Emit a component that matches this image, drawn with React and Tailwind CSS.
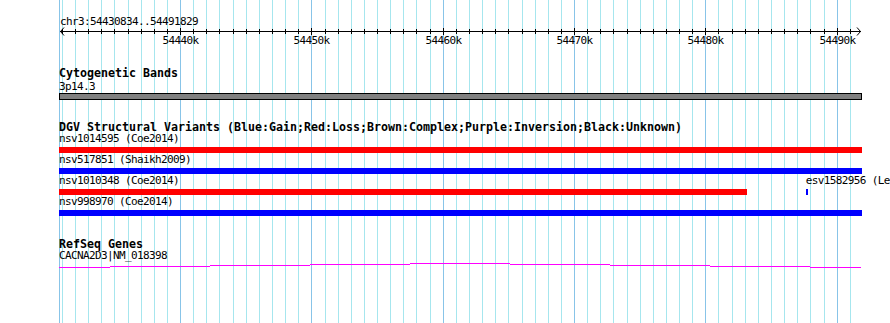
const START = 54430834;
const END = 54491829;
const SCALE = 801 / 60995;
const LEFT = 59; // left edge of the track area
const RIGHT = 862;

const toX = (bp) => 59.7 + (bp - START) * SCALE;
const clampX = (x) => Math.min(RIGHT, Math.max(LEFT, x));

const gridLines = [];
for (let k = 54431; k <= 54491; k++) {
  gridLines.push({ k, x: Math.round(toX(k * 1000)), major: k % 10 === 0 });
}

const dgvRows = [
  [{ name: 'nsv1014595', ref: 'Coe2014', start: 54300000, end: 54600000, color: 'bg-[#ff0000]' }],
  [{ name: 'nsv517851', ref: 'Shaikh2009', start: 54300000, end: 54600000, color: 'bg-[#0000ff]' }],
  [
    { name: 'nsv1010348', ref: 'Coe2014', start: 54300000, end: 54483147, color: 'bg-[#ff0000]' },
    { name: 'esv1582956', ref: 'Lee2008', start: 54487641, end: 54487793, color: 'bg-[#0000ff]' },
  ],
  [{ name: 'nsv998970', ref: 'Coe2014', start: 54300000, end: 54591700, color: 'bg-[#0000ff]' }],
];

// intron connector of CACNA2D3, drawn as a stepped shallow hat
const geneSteps = [
  [59, 110, 5],
  [110, 210, 4],
  [210, 310, 3],
  [310, 410, 2],
  [410, 510, 1],
  [510, 610, 2],
  [610, 710, 3],
  [710, 810, 4],
  [810, 861, 5],
];

const Title = ({ children, className = '' }) => (
  <div className={`text-[11.63px] font-bold whitespace-nowrap ${className}`}>{children}</div>
);

const Label = ({ children, className = '', style }) => (
  <div
    className={`h-[12px] text-[11px] leading-[12px] tracking-[-0.62px] whitespace-nowrap ${className}`}
    style={style}
  >
    {children}
  </div>
);

const Grid = () => (
  <svg className="absolute inset-0" width="890" height="323">
    <line x1="59.5" y1="0" x2="59.5" y2="323" stroke="#88c4e8" />
    {gridLines.map((g) => (
      <line
        key={g.k}
        x1={g.x + 0.5}
        y1="0"
        x2={g.x + 0.5}
        y2="323"
        stroke={g.major ? '#88c4e8' : '#a6e6ee'}
      />
    ))}
  </svg>
);

const Ruler = () => (
  <svg className="relative block" width="890" height="66">
    <text x="60" y="25" className="text-[11px] tracking-[-0.62px]" fill="#000">
      chr3:54430834..54491829
    </text>
    <line x1="60" y1="31.5" x2="861" y2="31.5" stroke="#000" />
    <polyline points="64,27.5 60.5,31.5 64,35.5" fill="none" stroke="#000" />
    <polyline points="857,27.5 860.5,31.5 857,35.5" fill="none" stroke="#000" />
    {gridLines.map((g) => (
      <line
        key={g.k}
        x1={g.x + 0.5}
        y1={g.major ? 28 : 29}
        x2={g.x + 0.5}
        y2={g.major ? 35 : 34}
        stroke="#000"
      />
    ))}
    {gridLines
      .filter((g) => g.major)
      .map((g) => (
        <text
          key={g.k}
          x={g.x + 0.5}
          y="44"
          textAnchor="middle"
          className="text-[11px] tracking-[-0.62px]"
          fill="#000"
        >
          {g.k}k
        </text>
      ))}
  </svg>
);

const DgvRow = ({ features, first }) => (
  <div className={first ? '' : 'mt-[1px]'}>
    <div className="relative h-[12px]">
      {features.map((f) => (
        <Label
          key={f.name}
          className="absolute top-0"
          style={{ left: clampX(toX(f.start)) - LEFT }}
        >
          {f.name} ({f.ref})
        </Label>
      ))}
    </div>
    <div className="relative mt-[2px] h-[6px]">
      {features.map((f) => {
        const x1 = clampX(toX(f.start));
        const x2 = clampX(toX(f.end));
        return (
          <div
            key={f.name}
            className={`absolute top-0 h-full ${f.color}`}
            style={{ left: x1 - LEFT, width: Math.max(1, x2 - x1) }}
          />
        );
      })}
    </div>
  </div>
);

const App = () => {
  return (
    <div className="relative w-[890px] h-[323px] overflow-hidden bg-white text-black font-['DejaVu_Sans_Mono',monospace]">
      <Grid />
      <Ruler />
      <div className="relative pl-[59px] w-[862px]">
        {/* Cytogenetic Bands */}
        <Title className="h-[14px] leading-[14px]">Cytogenetic Bands</Title>
        <Label className="h-[13px] leading-[13px]">3p14.3</Label>
        <div className="h-[7px] w-[803px] border border-black bg-[#808080]" />

        {/* DGV */}
        <Title className="mt-[21px] h-[12px] leading-[12px]">
          DGV Structural Variants (Blue:Gain;Red:Loss;Brown:Complex;Purple:Inversion;Black:Unknown)
        </Title>
        {dgvRows.map((row, i) => (
          <DgvRow key={i} features={row} first={i === 0} />
        ))}

        {/* RefSeq */}
        <Title className="mt-[22px] h-[12px] leading-[12px]">RefSeq Genes</Title>
        <Label>CACNA2D3|NM_018398</Label>
        <svg className="block -ml-[59px]" width="890" height="8">
          {geneSteps.map(([a, b, y], i) => (
            <rect key={i} x={a} y={y} width={b - a} height="1" fill="#ff00ff" />
          ))}
        </svg>
      </div>
    </div>
  );
};

export default App;
